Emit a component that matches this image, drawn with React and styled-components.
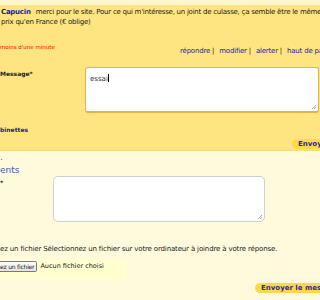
import React from "react";
import styled, { createGlobalStyle } from "styled-components";

const Global = createGlobalStyle`
  html, body { margin: 0; padding: 0; }
  body {
    width: 320px;
    height: 300px;
    overflow: hidden;
    background: #fffadb;
    font-family: "DejaVu Sans", Verdana, sans-serif;
  }
`;

const Page = styled.div`
  width: 320px;
  height: 300px;
  overflow: hidden;
  display: flex;
  flex-direction: column;
`;

const TopStrip = styled.div`
  height: 5px;
  background: #fff6cf;
`;

const Post = styled.div`
  background: #ffe581;
  border-bottom: 1px solid #f6da78;
  height: 145px;
  display: flex;
  flex-direction: column;
`;

const PostText = styled.p`
  margin: 2px 0 0 1px;
  font-size: 7px;
  line-height: 10px;
  color: #222;
  white-space: nowrap;
  letter-spacing: -0.25px;
`;

const Line = styled.span`
  display: block;
`;

const Author = styled.span`
  color: #1b1ba8;
  font-weight: bold;
  margin-right: 5px;
`;

const Meta = styled.div`
  display: grid;
  grid-template-columns: 180px 1fr;
  margin-top: 16px;
  height: 16px;
`;

const Date = styled.span`
  color: #f00;
  font-size: 5.5px;
  line-height: 8px;
`;

const Links = styled.div`
  display: flex;
  margin-top: 4px;
  font-size: 7px;
  line-height: 9px;
  white-space: nowrap;
  color: #222;
  letter-spacing: -0.2px;
`;

const Link = styled.a`
  color: #2424a8;
  text-decoration: none;
  margin-right: 2px;
`;

const Sep = styled.span`
  margin-right: 5px;
`;

const Field = styled.div`
  display: grid;
  grid-template-columns: ${(p) => p.labelWidth}px 1fr;
  margin-top: ${(p) => p.top}px;
`;

const Label = styled.label`
  font-size: 6px;
  font-weight: bold;
  line-height: 10px;
  color: #222;
  padding-top: 2px;
`;

const TextArea = styled.div`
  box-sizing: border-box;
  width: ${(p) => p.width}px;
  height: ${(p) => p.height}px;
  background: #fff;
  border: 1px solid ${(p) => p.border};
  border-bottom-width: ${(p) => p.bottom || 1}px;
  border-radius: ${(p) => p.radius}px;
  position: relative;
  padding: 6px 4px;
  font-size: 7px;
  line-height: 9px;
  color: #333;
`;

const Caret = styled.span`
  display: inline-block;
  width: 1px;
  height: 8px;
  background: #000;
  vertical-align: -1px;
`;

const Grip = styled.svg`
  position: absolute;
  right: 1px;
  bottom: 1px;
`;

const Smileys = styled.div`
  margin-top: 12px;
  font-size: 6px;
  font-weight: bold;
  color: #1e1e78;
  line-height: 9px;
`;

const ButtonRow = styled.div`
  display: flex;
  padding-left: ${(p) => p.left}px;
  margin-top: ${(p) => p.top}px;
  overflow: hidden;
`;

const Pill = styled.span`
  flex-shrink: 0;
  background: #ffd84a;
  color: #1f2aa4;
  font-weight: bold;
  font-size: 7px;
  line-height: 10px;
  height: 10px;
  padding: 0 6px;
  border-radius: 5px;
  white-space: nowrap;
`;

const Reply = styled.div`
  flex: 1;
  display: flex;
  flex-direction: column;
`;

const Legend = styled.div`
  font-size: 9px;
  line-height: 11px;
  color: #3d5fa6;
  margin-top: ${(p) => p.top}px;
`;

const Hint = styled.div`
  margin-top: 22px;
  font-size: 7px;
  line-height: 10px;
  color: #222;
  white-space: nowrap;
  letter-spacing: -0.15px;
`;

const FileBox = styled.div`
  width: 127px;
  height: 20px;
  margin-top: 6px;
  background: #ffffcf;
  display: flex;
  align-items: flex-start;
  padding-top: 1px;
  box-sizing: border-box;
  gap: 3px;
  font-size: 6.5px;
  color: #222;
`;

const FileButton = styled.span`
  border: 1px solid #7a7a7a;
  border-left: none;
  border-radius: 0 2px 2px 0;
  background: linear-gradient(#fdfdfd, #e4e4e4);
  font-size: 6px;
  line-height: 9px;
  padding: 0 2px 0 0;
  letter-spacing: -0.2px;
`;

const FileName = styled.span`
  line-height: 11px;
`;

function ResizeGrip() {
  return (
    <Grip width="6" height="6" viewBox="0 0 6 6">
      <path d="M5 1L1 5M5 3L3 5" stroke="#999" strokeWidth="0.8" />
    </Grip>
  );
}

export default function App() {
  return (
    <Page>
      <Global />
      <TopStrip />
      <Post>
        <PostText>
          <Line>
            <Author>Capucin</Author>
            merci pour le site. Pour ce qui m'intéresse, un joint de culasse, ça semble être le même
          </Line>
          <Line>prix qu'en France (€ oblige)</Line>
        </PostText>
        <Meta>
          <Date>moins d'une minute</Date>
          <Links>
            <Link href="#">répondre</Link>
            <Sep>|</Sep>
            <Link href="#">modifier</Link>
            <Sep>|</Sep>
            <Link href="#">alerter</Link>
            <Sep>|</Sep>
            <Link href="#">haut de page</Link>
          </Links>
        </Meta>
        <Field labelWidth={85} top={8}>
          <Label>Message*</Label>
          <TextArea width={234} height={46} border="#eab43c" bottom={2} radius={3}>
            essai<Caret />
            <ResizeGrip />
          </TextArea>
        </Field>
        <Smileys>binettes</Smileys>
        <ButtonRow left={292} top={5}>
          <Pill>Envoyer</Pill>
        </ButtonRow>
      </Post>
      <Reply>
        <Legend top={4}>·</Legend>
        <Legend top={-1}>ents</Legend>
        <Field labelWidth={53} top={0}>
          <Label>*</Label>
          <TextArea width={212} height={46} border="#cfcfcf" radius={5}>
            <ResizeGrip />
          </TextArea>
        </Field>
        <Hint>
          ez un fichier Sélectionnez un fichier sur votre ordinateur à joindre à votre réponse.
        </Hint>
        <FileBox>
          <FileButton>ez un fichier</FileButton>
          <FileName>Aucun fichier choisi</FileName>
        </FileBox>
        <ButtonRow left={255} top={3}>
          <Pill>Envoyer le message</Pill>
        </ButtonRow>
      </Reply>
    </Page>
  );
}
